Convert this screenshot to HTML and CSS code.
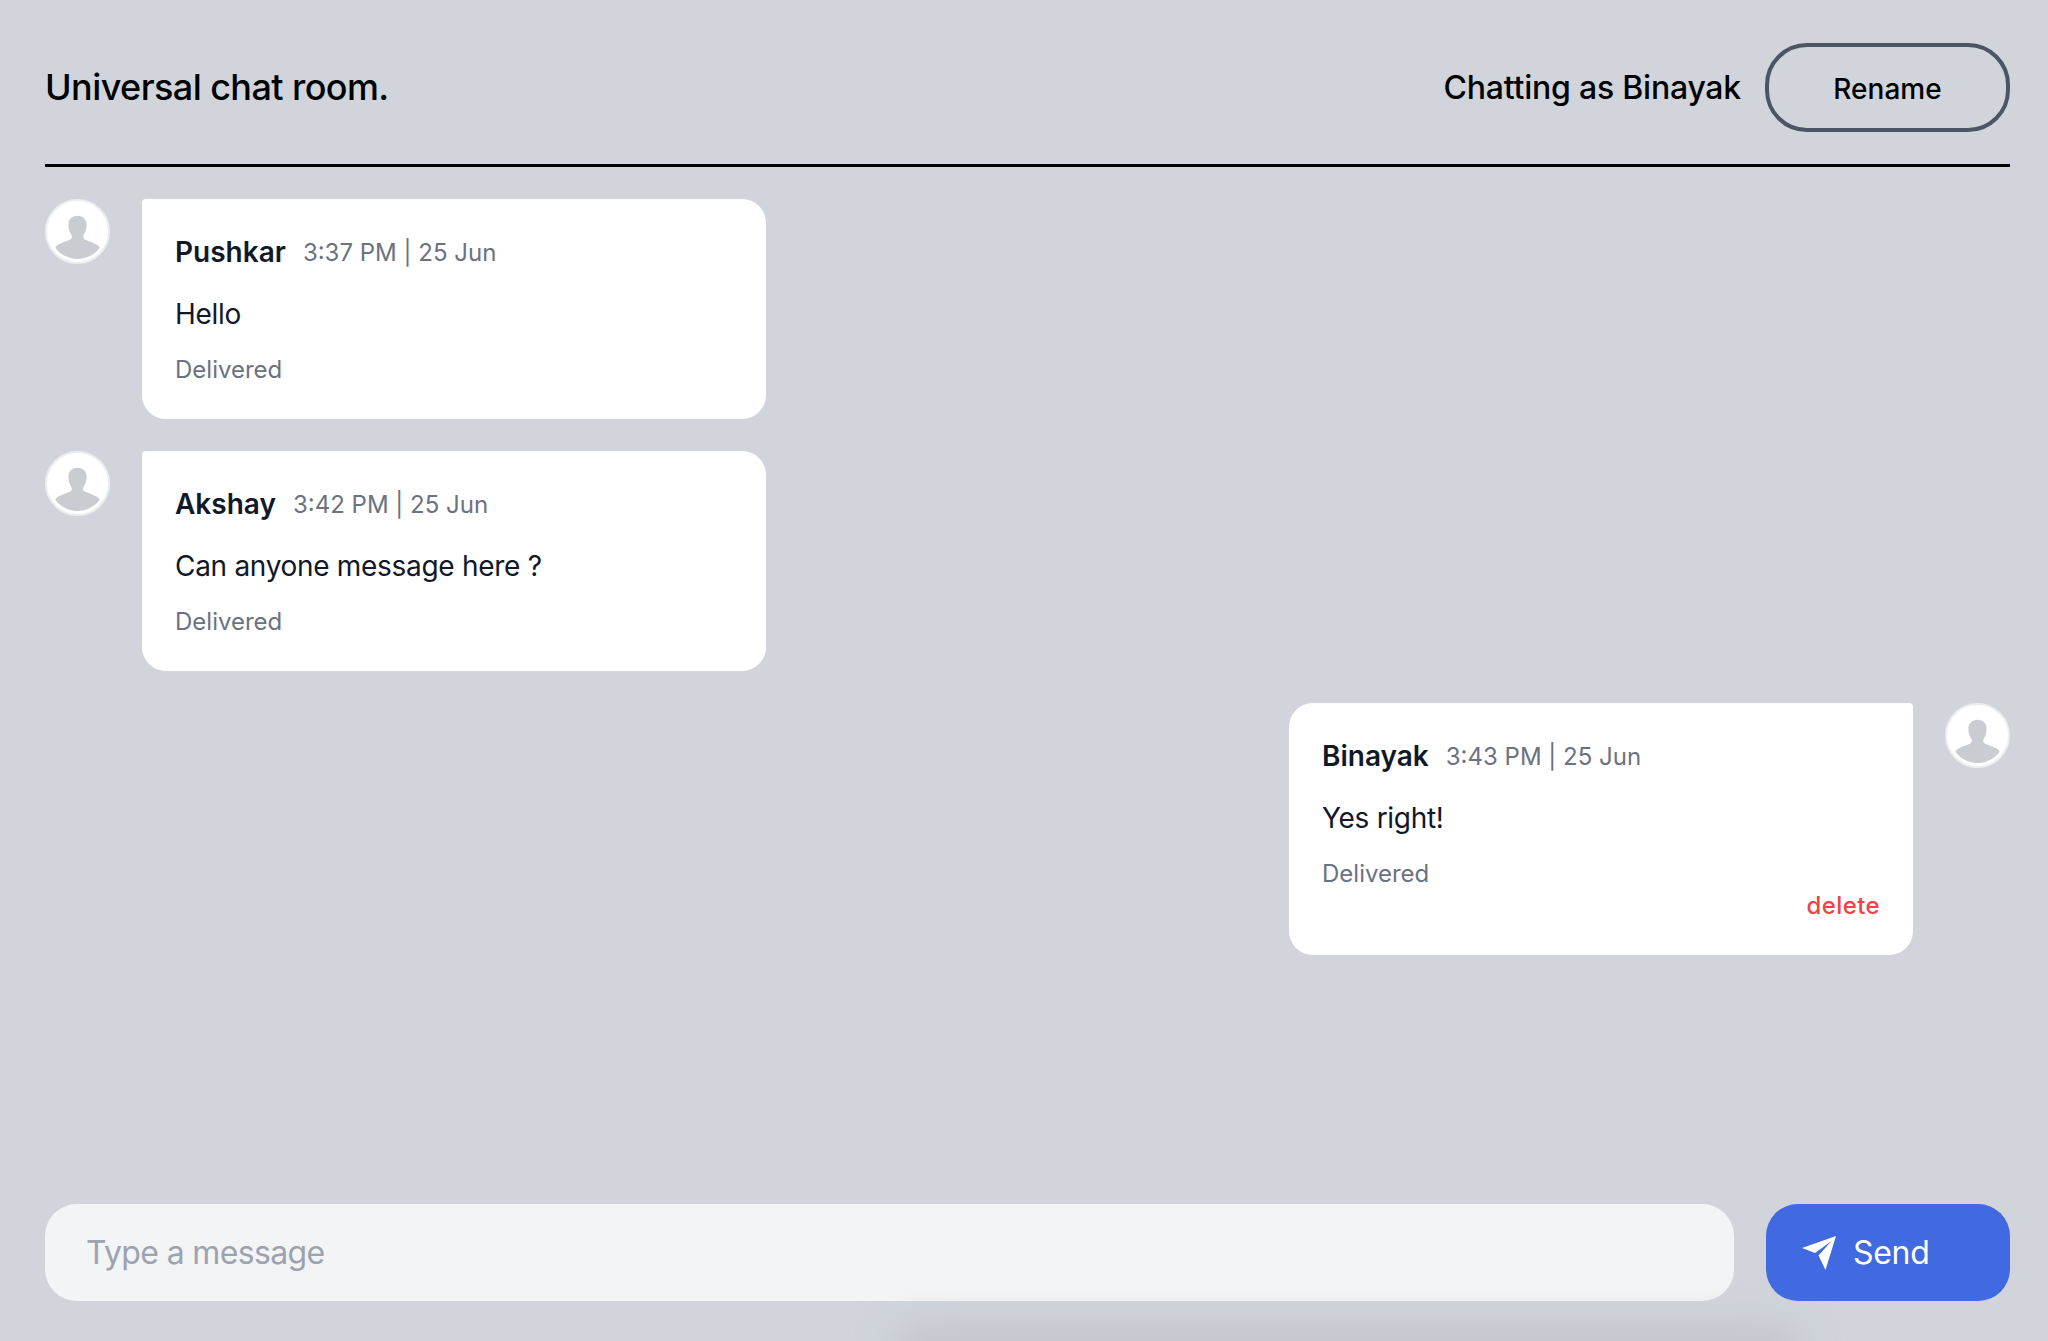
FILE: index.html
```html
<!DOCTYPE html>
<html lang="en">
<head>
<meta charset="utf-8">
<title>Universal chat room.</title>
<link rel="stylesheet" href="styles.css">
</head>
<body>
<div class="app">
  <header class="header">
    <h1 class="title">Universal chat room.</h1>
    <div class="user">
      <span class="user-name">Chatting as Binayak</span>
      <button class="rename">Rename</button>
    </div>
  </header>
  <main class="messages">
    <div class="row">
      <svg class="avatar" viewBox="0 0 64 64"><circle cx="32" cy="32" r="31" fill="#fff" stroke="#eceef0" stroke-width="2"/><path class="person" d="M32 16.500c-5.500 0-9 3.500-9 9 0 4 1.500 7.500 3 10 .9 1.500.4 3.500-1.500 4.500-3 1.600-10 3-13.500 6.500-.8.800-.8 1.600-.3 2.300C15.500 55 23 59 32 59s16.500-4 21.300-10.200c.5-.7.5-1.500-.3-2.300-3.500-3.500-10.500-4.900-13.500-6.500-1.900-1-2.400-3-1.500-4.500 1.500-2.500 3-6 3-10 0-5.500-3.500-9-9-9z"/></svg>
      <article class="card card-left">
        <div class="meta"><span class="name">Pushkar</span><span class="time">3:37 PM | 25 Jun</span></div>
        <p class="text">Hello</p>
        <p class="status">Delivered</p>
      </article>
    </div>
    <div class="row">
      <svg class="avatar" viewBox="0 0 64 64"><circle cx="32" cy="32" r="31" fill="#fff" stroke="#eceef0" stroke-width="2"/><path class="person" d="M32 16.500c-5.500 0-9 3.500-9 9 0 4 1.500 7.500 3 10 .9 1.500.4 3.500-1.500 4.500-3 1.600-10 3-13.500 6.500-.8.800-.8 1.600-.3 2.300C15.500 55 23 59 32 59s16.500-4 21.300-10.200c.5-.7.5-1.500-.3-2.300-3.500-3.500-10.500-4.900-13.500-6.500-1.900-1-2.400-3-1.500-4.500 1.500-2.500 3-6 3-10 0-5.500-3.500-9-9-9z"/></svg>
      <article class="card card-left">
        <div class="meta"><span class="name">Akshay</span><span class="time">3:42 PM | 25 Jun</span></div>
        <p class="text">Can anyone message here ?</p>
        <p class="status">Delivered</p>
      </article>
    </div>
    <div class="row row-own">
      <article class="card card-right">
        <div class="meta"><span class="name">Binayak</span><span class="time">3:43 PM | 25 Jun</span></div>
        <p class="text">Yes right!</p>
        <p class="status">Delivered</p>
        <div class="actions"><span class="delete">delete</span></div>
      </article>
      <svg class="avatar" viewBox="0 0 64 64"><circle cx="32" cy="32" r="31" fill="#fff" stroke="#eceef0" stroke-width="2"/><path class="person" d="M32 16.500c-5.500 0-9 3.500-9 9 0 4 1.500 7.500 3 10 .9 1.500.4 3.500-1.500 4.500-3 1.600-10 3-13.500 6.500-.8.800-.8 1.600-.3 2.300C15.500 55 23 59 32 59s16.500-4 21.300-10.200c.5-.7.5-1.500-.3-2.300-3.500-3.500-10.500-4.900-13.500-6.500-1.900-1-2.400-3-1.500-4.500 1.500-2.500 3-6 3-10 0-5.500-3.500-9-9-9z"/></svg>
    </div>
  </main>
  <footer class="composer">
    <input class="input" type="text" placeholder="Type a message">
    <button class="send">
      <svg class="send-icon" viewBox="0 0 34 34"><path d="M0 12 34 0 23.500 34 16.500 19.500 29.500 5 13 17z"/></svg>
      <span class="send-label">Send</span>
    </button>
  </footer>
</div>
</body>
</html>
```
FILE: styles.css
```css
* { box-sizing: border-box; }
html, body { margin: 0; height: 100%; }
body {
  background: #d1d5db;
  font-family: Inter, "Liberation Sans", sans-serif;
  color: #111827;
  overflow: hidden;
}
.app {
  height: 1341px;
  padding: 0 38px 40px 45px;
  display: flex;
  flex-direction: column;
  position: relative;
}
.header {
  height: 167px;
  flex: none;
  display: flex;
  align-items: flex-start;
  justify-content: space-between;
  padding-top: 43px;
  border-bottom: 3px solid #000;
}
.title {
  margin: 0;
  font-size: 36px;
  line-height: 88px;
  font-weight: 500;
  color: #000;
  letter-spacing: -0.58px;
}
.user { display: flex; align-items: center; gap: 24px; }
.user-name { font-size: 32px; font-weight: 500; color: #000; letter-spacing: -0.22px; }
.rename {
  width: 245px;
  height: 89px;
  border: 4px solid #4b5563;
  border-radius: 42px;
  background: transparent;
  font: 500 28px Inter, sans-serif;
  color: #000;
  padding: 2px 0 0;
}
.messages {
  flex: 1;
  padding-top: 32px;
  display: flex;
  flex-direction: column;
  gap: 32px;
}
.row { display: flex; gap: 32px; align-items: flex-start; }
.row-own { justify-content: flex-end; }
.avatar { width: 65px; height: 65px; flex: none; }
.person { fill: #c9cdd2; }
.card {
  width: 624px;
  background: #fff;
  border-radius: 24px;
  padding: 33px;
}
.card-left { border-top-left-radius: 4px; }
.card-right { border-top-right-radius: 4px; }
.meta { display: flex; align-items: center; gap: 17px; height: 40px; }
.name { font-size: 28px; font-weight: 600; }
.time { font-size: 24px; color: #6b7280; }
.text { margin: 23px 0 0; font-size: 28px; line-height: 38px; color: #111827; letter-spacing: -0.3px; }
.status { margin: 21px 0 0; font-size: 24px; line-height: 32px; color: #6b7280; }
.actions { display: flex; justify-content: flex-end; }
.delete { font-size: 24px; line-height: 32px; font-weight: 500; color: #ef4444; letter-spacing: 0.4px; }
.composer {
  flex: none;
  display: flex;
  gap: 32px;
  height: 97px;
  position: relative;
}
.composer::after {
  content: "";
  position: absolute;
  left: 850px;
  right: 210px;
  top: 128px;
  height: 40px;
  background: #bcbfc4;
  filter: blur(22px);
  border-radius: 20px;
}
.input {
  flex: 1;
  min-width: 0;
  background: #f3f4f6;
  border: 0;
  border-radius: 32px;
  padding: 0 41px;
  font: 400 32px Inter, sans-serif;
  letter-spacing: -0.65px;
  outline: none;
}
.input::placeholder { color: #9ca3af; opacity: 1; }
.send {
  width: 244px;
  border: 0;
  border-radius: 32px;
  background: #4169e1;
  color: #fff;
  display: flex;
  align-items: center;
  gap: 17px;
  padding: 0 36px;
  font: 400 32px Inter, sans-serif;
}
.send-label { letter-spacing: -0.3px; }
.send-icon { width: 34px; height: 34px; fill: #fff; flex: none; }
```
